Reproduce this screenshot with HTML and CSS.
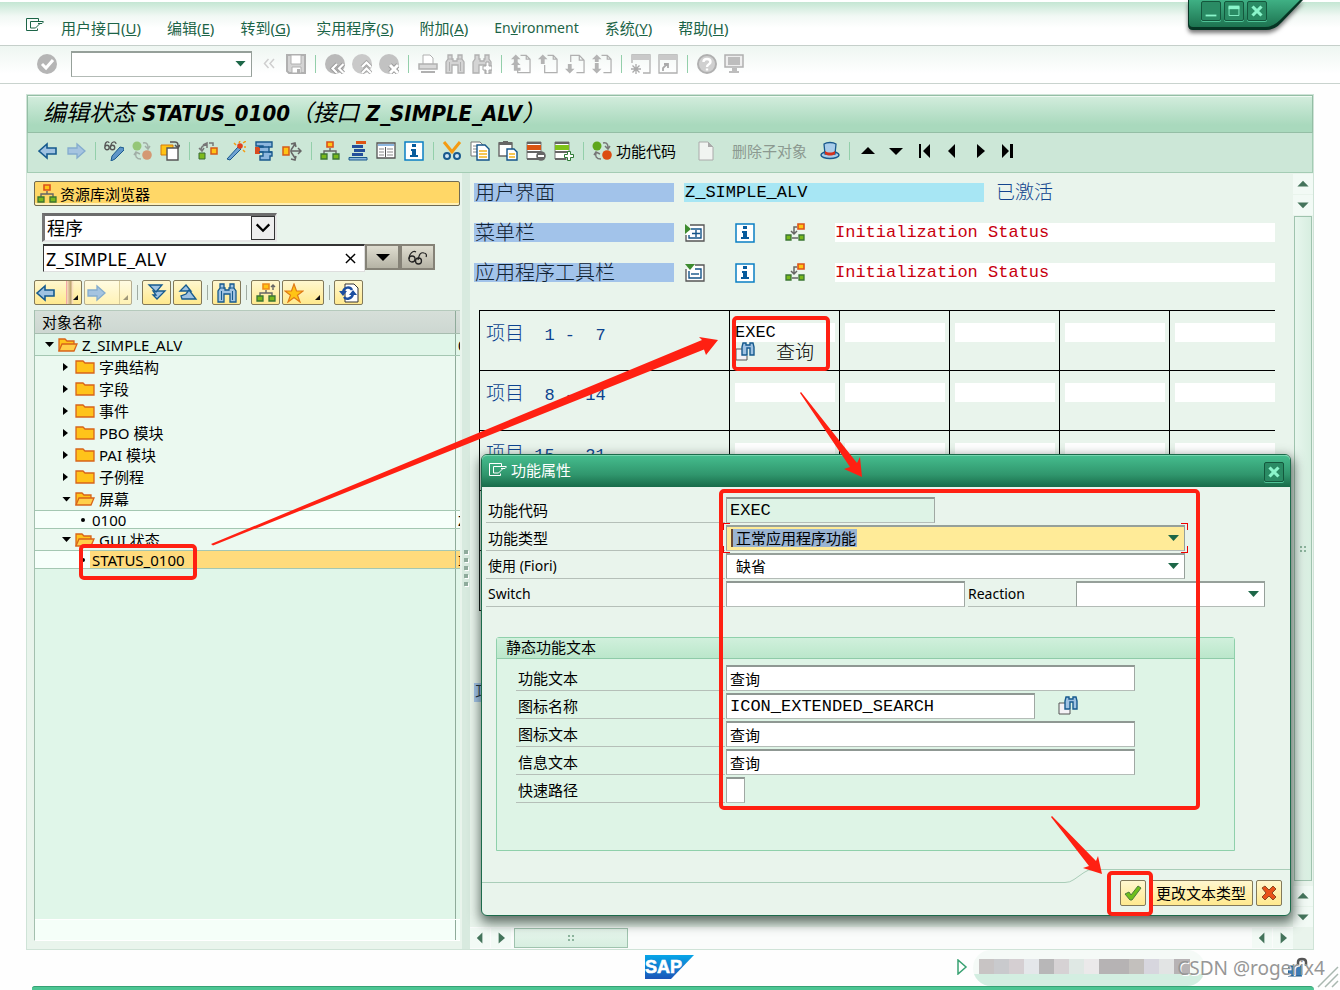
FILE: index.html
```html
<!DOCTYPE html>
<html lang="zh-CN">
<head>
<meta charset="utf-8">
<title>编辑状态 STATUS_0100</title>
<link rel="stylesheet" href="styles.css">
</head>
<body>
<svg class="defs" aria-hidden="true">
  <defs>
    <linearGradient id="winFill" x1="0" y1="0" x2="0" y2="1"><stop offset="0" stop-color="#3fb084"/><stop offset="1" stop-color="#1d7350"/></linearGradient>
    <linearGradient id="sapFill" x1="0" y1="0" x2="0" y2="1"><stop offset="0" stop-color="#07a6e8"/><stop offset="1" stop-color="#1b55b8"/></linearGradient>
  </defs>
  <symbol id="i-exit" viewBox="0 0 20 16"><path d="M13.500 4.500V1.500H1.500v12h11v-2M5.500 4.500h12.500c1 0 0 1-1 2l-4 0M5.500 4.500v6.500h5l2-2 2-2" fill="none" stroke="currentColor"/></symbol>
  <symbol id="i-ok" viewBox="0 0 20 20"><circle cx="10" cy="10" r="10" fill="#b5b5b5"/><path d="M5 10l4 4 7-8" fill="none" stroke="#fff" stroke-width="3"/></symbol>
  <symbol id="i-dbl" viewBox="0 0 20 20"><path d="M9.500 5l-4 4.500 4 4.500M15 5l-4 4.500 4 4.500" fill="none" stroke="#cfcfcf" stroke-width="1.500"/></symbol>
  <symbol id="i-save" viewBox="0 0 20 20"><path d="M1 1h18v18H3l-2-2z" fill="#d4d4d4" stroke="#b0b0b0" stroke-width="2"/><path d="M5 1h10v9H5zM6 13h9v6H6z" fill="#fff" stroke="#b0b0b0"/><path d="M11 15h3v4h-3z" fill="#b0b0b0"/></symbol>
  <symbol id="i-back" viewBox="0 0 20 20"><circle cx="10" cy="10" r="10" fill="#b9b9b9"/><path d="M12 10l-4.500 4.500L12 19M18.500 10L14 14.500l4.500 4.500" fill="none" stroke="#999" stroke-width="4"/><path d="M12 10l-4.500 4.500L12 19M18.500 10L14 14.500l4.500 4.500" fill="none" stroke="#fff" stroke-width="2.200"/></symbol>
  <symbol id="i-up" viewBox="0 0 20 20"><circle cx="10" cy="10" r="10" fill="#c9c9c9"/><path d="M10 13l4.500-4.500L19 13M10 19l4.500-4.500L19 19" fill="none" stroke="#a5a5a5" stroke-width="4"/><path d="M10 13l4.500-4.500L19 13M10 19l4.500-4.500L19 19" fill="none" stroke="#fff" stroke-width="2.200"/></symbol>
  <symbol id="i-cancel" viewBox="0 0 20 20"><circle cx="10" cy="10" r="10" fill="#c2c2c2"/><path d="M11 11l8 8M19 11l-8 8" stroke="#999" stroke-width="4.800"/><path d="M11 11l8 8M19 11l-8 8" stroke="#fff" stroke-width="3"/></symbol>
  <symbol id="i-print" viewBox="0 0 20 20"><path d="M5 10V1h7l3 3v6" fill="#fff" stroke="#b0b0b0"/><path d="M1 10h18v5H1z" fill="#d8d8d8" stroke="#b0b0b0" stroke-width="1.500"/><path d="M3 17h14v2H3z" fill="#b0b0b0"/></symbol>
  <symbol id="i-find" viewBox="0 0 20 20"><path d="M3 1h4v4h1v2h4V5h1V1h4v4l2 3v11h-6v-8H7v8H1V8l2-3z" fill="var(--ff,#d4d4d4)" stroke="var(--fs,#b0b0b0)" stroke-width="1.300"/><path d="M3 5h4M13 5h4M4.500 8v9M15.500 8v9" stroke="var(--fs,#b0b0b0)"/></symbol>
  <symbol id="i-findn" viewBox="0 0 20 20"><path d="M3 1h4v4h1v2h4V5h1V1h4v4l2 3v11h-6v-8H7v8H1V8l2-3z" fill="#d4d4d4" stroke="#b0b0b0" stroke-width="1.300"/><path d="M14 8h3v4h3v4h-3v4h-3v-4h-3v-4h3z" fill="#fff" stroke="#a5a5a5"/></symbol>
  <symbol id="i-pgf" viewBox="0 0 21 20"><path d="M10 1h6l4 4v14H7v-3M16 1v4h4" fill="none" stroke="#b0b0b0" stroke-width="1.300"/><path d="M5 0l5 5H7v3H3V5H0zM5 6l5 5H7v3h3v3H3v-6H0z" fill="#b4b4b4"/></symbol>
  <symbol id="i-pgu" viewBox="0 0 21 20"><path d="M10 1h6l4 4v14H7V11M16 1v4h4" fill="none" stroke="#b0b0b0" stroke-width="1.300"/><path d="M5 0l5 5H7v5H3V5H0z" fill="#b4b4b4"/></symbol>
  <symbol id="i-pgd" viewBox="0 0 21 20"><path d="M6 8V1h9l5 5v13h-8M15 1v5h5" fill="none" stroke="#b0b0b0" stroke-width="1.300"/><path d="M5 20l5-5H7v-5H3v5H0z" fill="#b4b4b4"/></symbol>
  <symbol id="i-pgl" viewBox="0 0 21 20"><path d="M10 1h6l4 4v14h-8M16 1v4h4" fill="none" stroke="#b0b0b0" stroke-width="1.300"/><path d="M5 0l5 5H7v3H3V5H0zM5 20l5-5H7V9H3v6H0z" fill="#b4b4b4"/></symbol>
  <symbol id="i-newwin" viewBox="0 0 20 20"><path d="M1 9V1h18v18h-7" fill="none" stroke="#b0b0b0" stroke-width="1.300"/><path d="M1 1h18v5H1z" fill="#c9c9c9"/><path d="M5 10v10M0 15h10M1.500 11.500l7 7M8.500 11.500l-7 7" stroke="#aaa" stroke-width="1.300"/></symbol>
  <symbol id="i-short" viewBox="0 0 20 20"><path d="M1 1h18v18H1z" fill="none" stroke="#b0b0b0" stroke-width="1.300"/><path d="M1 1h18v5H1z" fill="#c9c9c9"/><path d="M5 17v-3l4-4M6 10h4v4" fill="none" stroke="#aaa" stroke-width="1.800"/></symbol>
  <symbol id="i-help" viewBox="0 0 20 20"><circle cx="10" cy="10" r="9" fill="#d0d0d0" stroke="#b0b0b0" stroke-width="2"/><path d="M6.500 8c0-4 7-4 7 0 0 2.500-3.500 2-3.500 5M10 14.500v2" fill="none" stroke="#fff" stroke-width="2.400"/></symbol>
  <symbol id="i-mon" viewBox="0 0 20 20"><path d="M1 1h18v12H1z" fill="#eee" stroke="#b0b0b0" stroke-width="1.500"/><path d="M4 3h12v8H4zM8 14h5v3h2v2H5v-2h3z" fill="#bdbdbd"/></symbol>

  <symbol id="i-left" viewBox="0 0 20 20"><path d="M1 10l8-7v4h9v6H9v4z" fill="#9fc2e2" stroke="#165a8e" stroke-width="1.600"/></symbol>
  <symbol id="i-right" viewBox="0 0 20 20"><path d="M19 10l-8-7v4H2v6h9v4z" fill="#a5c4e0" stroke="#84acce" stroke-width="1.300"/></symbol>
  <symbol id="i-edit" viewBox="0 0 20 20"><path d="M1 5c0-5 4-5 4-3M7 5c0-5 5-5 5-2" fill="none" stroke="#555" stroke-width="1.200"/><circle cx="3" cy="6.500" r="2.200" fill="none" stroke="#555" stroke-width="1.400"/><circle cx="8.500" cy="6.500" r="2.200" fill="none" stroke="#555" stroke-width="1.400"/><path d="M8 15l8-9 4 1v2l-9 9-4 2z" fill="#5f96c8" stroke="#19598d"/></symbol>
  <symbol id="i-act" viewBox="0 0 20 20"><circle cx="5" cy="5" r="4.500" fill="#5fa71c"/><circle cx="15" cy="14" r="4.800" fill="#dc4c12"/><path d="M11 2c5-1 5 3 5 5M13 5l3 3 2-3M9 18c-5 0-6-3-5-6M2 14l2-3 4 2" fill="none" stroke="#777" stroke-width="1.500"/></symbol>
  <symbol id="i-other" viewBox="0 0 20 20"><path d="M1 4h12v10H1z" fill="#ffc414" stroke="#d77a0b"/><path d="M7 7h11v12H7z" fill="#fff" stroke="#555" stroke-width="1.400"/><path d="M10 1h5c3 0 3 2 3 5M15 4l3 3 2-3" fill="none" stroke="#555" stroke-width="1.500"/></symbol>
  <symbol id="i-where" viewBox="0 0 20 20"><path d="M1 12h6v6H1z" fill="#7dbb1d" stroke="#396b35"/><path d="M13 7h6v6h-6z" fill="#ffc414" stroke="#d55b18" stroke-width="1.500"/><path d="M3 9c0-5 4-5 6-5M5 4l4-2v5M15 5V2h-4M1 7l3 3 2-3" fill="none" stroke="#777" stroke-width="1.500"/></symbol>
  <symbol id="i-wand" viewBox="0 0 20 20"><path d="M1 18L12 6l3 2L4 19z" fill="#6fa3d3" stroke="#19598d"/><path d="M13 2l1-2M17 2l3-2M18 6h2M17 9l2 2M10 4L8 2" stroke="#f49b12" stroke-width="1.500"/><circle cx="14" cy="5" r="2.800" fill="#e1401d"/></symbol>
  <symbol id="i-clamp" viewBox="0 0 20 20"><path d="M2 1h16v5h-3v5h3v4h-2v4H6v-4h3v-4H5V6h4V5H2z" fill="#8db7df" stroke="#19598d" stroke-width="1.400"/><path d="M1 6h5v7H1z" fill="#d94b20"/><path d="M5 6h10M5 11h13" stroke="#19598d" stroke-width="1.400"/></symbol>
  <symbol id="i-move" viewBox="0 0 20 20"><path d="M1 6h6v8H1z" fill="#ffc414" stroke="#d55b18" stroke-width="1.500"/><path d="M8 10h11M16 7l3 3-3 3M9 9l4-6M9 3l4-1 1 4M9 11l4 6M9 18l4 1 1-4" fill="none" stroke="#666" stroke-width="1.500"/></symbol>
  <symbol id="i-tree" viewBox="0 0 20 20"><path d="M7 1h6v5H7z" fill="#ffc414" stroke="#dc5118" stroke-width="1.600"/><path d="M10 7v3M4 13v-3h12v3" fill="none" stroke="#666" stroke-width="1.400"/><path d="M1 13h6v5H1zM13 13h6v5h-6z" fill="#78b81b" stroke="#3b7533" stroke-width="1.300"/></symbol>
  <symbol id="i-parent" viewBox="0 0 20 20"><path d="M7 1h6v5H7z" fill="#ffc414" stroke="#ee8a18" stroke-width="1.600"/><path d="M10 7v3M4 13v-3h12v3M17 7V2M15 4l2-2 2 2" fill="none" stroke="#666" stroke-width="1.400"/><path d="M1 13h6v5H1zM13 13h6v5h-6z" fill="#78b81b" stroke="#3b7533" stroke-width="1.300"/></symbol>
  <symbol id="i-stack" viewBox="0 0 20 20"><path d="M8 0h10v3H8z" fill="#de5514"/><path d="M4 4h11v3H4zM6 8h11v3H6z" fill="#234f9a"/><path d="M4 12h11v3H4z" fill="#234f9a"/><path d="M1 16.500h18v2.500H1z" fill="#8db7df" stroke="#19598d"/></symbol>
  <symbol id="i-list" viewBox="0 0 20 20"><path d="M1 2h18v15H1z" fill="#fff" stroke="#555" stroke-width="1.300"/><path d="M2 3h16v2H2z" fill="#8db7df"/><path d="M3 8h5M3 11h5M3 14h5M11 8h6M11 11h6M11 14h6" stroke="#888" stroke-width="1.200"/><path d="M9.500 6v10" stroke="#555"/></symbol>
  <symbol id="i-info" viewBox="0 0 20 20"><path d="M1 1h18v18H1z" fill="#fff" stroke="#0a7fc4" stroke-width="1.500"/><path d="M8 3h4v3H8zM7 8h5v6h2v2H6v-2h2v-4H7z" fill="#075b9c"/></symbol>
  <symbol id="i-cut" viewBox="0 0 20 20"><path d="M2 1l9 11M18 1L9 12" stroke="#f49b12" stroke-width="3"/><circle cx="5" cy="15" r="3" fill="#cfe5f5" stroke="#19598d" stroke-width="2"/><circle cx="15" cy="15" r="3" fill="#cfe5f5" stroke="#19598d" stroke-width="2"/></symbol>
  <symbol id="i-copy" viewBox="0 0 20 20"><path d="M1 1h9l3 3v11H1z" fill="#fff" stroke="#777"/><path d="M3 5h5M3 8h4M3 11h4" stroke="#888"/><path d="M7 4h8l4 4v11H7z" fill="#fff" stroke="#145489" stroke-width="1.400"/><path d="M9 10h8M9 13h8M9 16h8" stroke="#f3b41b" stroke-width="1.500"/></symbol>
  <symbol id="i-paste" viewBox="0 0 20 20"><path d="M1 2h13v13H1z" fill="#fff" stroke="#666" stroke-width="1.400"/><path d="M1 1h13v3H1zM5 0h5v3H5z" fill="#666"/><path d="M9 8h7l3 3v8H9z" fill="#fff" stroke="#145489" stroke-width="1.400"/><path d="M11 13h6M11 16h6" stroke="#f3b41b" stroke-width="1.500"/></symbol>
  <symbol id="i-delrow" viewBox="0 0 20 20"><path d="M1 1h14v17H1z" fill="#fff" stroke="#777"/><path d="M1 4h14v5H1z" fill="#d95412"/><path d="M1 1h14v2H1zM1 10h14v2H1zM1 17h11v2H1z" fill="#666"/><circle cx="15" cy="15" r="4.800" fill="#666"/><path d="M12 15h6" stroke="#fff" stroke-width="2"/></symbol>
  <symbol id="i-addrow" viewBox="0 0 20 20"><path d="M1 1h14v17H1z" fill="#fff" stroke="#777"/><path d="M1 4h14v5H1z" fill="#7fc21a"/><path d="M1 1h14v2H1zM1 10h14v2H1zM1 17h11v2H1z" fill="#666"/><path d="M13.500 10.500h3v3h3v3h-3v3h-3v-3h-3v-3h3z" fill="#fff" stroke="#2d7a35"/></symbol>
  <symbol id="i-page" viewBox="0 0 20 20"><path d="M3 1h9l5 5v13H3z" fill="#f1f4f1" stroke="#aaa"/><path d="M12 1v5h5z" fill="#aaa"/></symbol>
  <symbol id="i-hat" viewBox="0 0 20 20"><ellipse cx="10" cy="14" rx="9" ry="3.500" fill="#a9cdea" stroke="#19598d" stroke-width="1.500"/><path d="M5 13L4 3c3-2 9-2 12 0l-1 10z" fill="#a9cdea" stroke="#19598d" stroke-width="1.300"/><path d="M5 10c3 2 7 2 10 0v3c-3 2-7 2-10 0z" fill="#d4321c"/></symbol>
  <symbol id="i-tup" viewBox="0 0 20 20"><path d="M3 13l7-7 7 7z"/></symbol>
  <symbol id="i-tdn" viewBox="0 0 20 20"><path d="M3 7l7 7 7-7z"/></symbol>
  <symbol id="i-first" viewBox="0 0 20 20"><path d="M5 3h2v14H5zM16 3v14l-7-7z"/></symbol>
  <symbol id="i-prev" viewBox="0 0 20 20"><path d="M13 3v14l-7-7z"/></symbol>
  <symbol id="i-next" viewBox="0 0 20 20"><path d="M7 3v14l8-7z"/></symbol>
  <symbol id="i-last" viewBox="0 0 20 20"><path d="M4 3v14l7-7zM12 3h3v14h-3z"/></symbol>

  <symbol id="i-glass" viewBox="0 0 20 20"><path d="M1 12c0-5 4-9 7-7M10 13c1-6 3-8 6-7 2 0 3 2 2 4" fill="none" stroke="#222" stroke-width="1.200"/><circle cx="4" cy="12" r="3" fill="none" stroke="#222" stroke-width="1.300"/><circle cx="10.500" cy="14" r="3" fill="none" stroke="#222" stroke-width="1.300"/></symbol>
  <symbol id="i-expand" viewBox="0 0 20 20"><path d="M6 8h12l-8 8-4-4h3z" fill="#9fc2e2" stroke="#165a8e" stroke-width="1.300"/><path d="M2 2h13l-6 7z" fill="#9fc2e2" stroke="#165a8e" stroke-width="1.300"/></symbol>
  <symbol id="i-collapse" viewBox="0 0 20 20"><path d="M8 2l5 6H2z" fill="#9fc2e2" stroke="#165a8e" stroke-width="1.300"/><path d="M11 7l7 9H4l-1-3 5-2z" fill="#9fc2e2" stroke="#165a8e" stroke-width="1.300"/></symbol>
  <symbol id="i-star" viewBox="0 0 20 20"><path d="M10 1l2.500 7H19l-5.500 4.200L16 19l-6-4.500L4 19l2.500-6.800L1 8h6.500z" fill="#ffc414" stroke="#e07a16" stroke-width="1.200"/></symbol>
  <symbol id="i-refresh" viewBox="0 0 20 20"><path d="M6 1h9l4 4v14H6z" fill="#fff" stroke="#333"/><path d="M4 9c1-5 7-6 9-2M14 11c-1 5-7 6-9 3" fill="none" stroke="#1d4fa0" stroke-width="2.400"/><path d="M0 8h8l-4 5zM10 12h8l-4-5z" fill="#1d4fa0"/></symbol>
  <symbol id="i-folder" viewBox="0 0 20 14"><path d="M1 13V1h7l2 2h9v10z" fill="#ffc31a" stroke="#d8641a" stroke-width="1.300"/></symbol>
  <symbol id="i-fopen" viewBox="0 0 20 14"><path d="M1 13V1h6l2 2h7v3" fill="#ffc31a" stroke="#d8641a" stroke-width="1.300"/><path d="M1 13l3-7h15l-3 7z" fill="#ffcf4a" stroke="#d8641a" stroke-width="1.300"/></symbol>
  <symbol id="i-plus" viewBox="0 0 20 20"><path d="M5 2h14v16H1v-6" fill="#fff" stroke="#555" stroke-width="1.300"/><path d="M6 6h10v9H4v-3" fill="none" stroke="#145489" stroke-width="1.400"/><path d="M7 10.500h8M11 7v7" stroke="#145489" stroke-width="1.400"/><path d="M0 1l6 5-6 5z" fill="#3d8b2f"/></symbol>
  <symbol id="i-minus" viewBox="0 0 20 20"><path d="M10 2h9v16H1V6" fill="#fff" stroke="#555" stroke-width="1.300"/><path d="M10 6h6v9H4V8" fill="none" stroke="#145489" stroke-width="1.400"/><path d="M6 11h8" stroke="#145489" stroke-width="1.400"/><path d="M0 1h10L5 7z" fill="#3d8b2f"/></symbol>
  <symbol id="i-hier" viewBox="0 0 20 20"><path d="M13 1h6v5h-6z" fill="#ffc414" stroke="#dc5118" stroke-width="1.600"/><path d="M12 4H9v6M6 8l3 3 3-3M7 15h6" fill="none" stroke="#666" stroke-width="1.500"/><path d="M1 12h5v5H1zM14 12h5v5h-5z" fill="#78b81b" stroke="#3b7533" stroke-width="1.300"/></symbol>
  <symbol id="i-ext" viewBox="0 0 20 20"><path d="M7 7H1v11h11v-4" fill="#f4f2f6" stroke="#555"/><path d="M8 1h3v2h4V1h3l1 4v8h-4V6h-3v7H7V5z" fill="#9fc2e2" stroke="#165a8e" stroke-width="1.400"/></symbol>
  <symbol id="i-check" viewBox="0 0 20 20"><path d="M2 11l4-2 2 3 7-9 3 2-9 12H7z" fill="#6fbf1c" stroke="#4b7c3c"/></symbol>
  <symbol id="i-x" viewBox="0 0 20 20"><path d="M3 5l3-2 4 4 4-4 3 3-4 4 4 4-3 3-4-4-4 4-3-3 4-4z" fill="#e8531a" stroke="#8a4a25"/></symbol>
  <symbol id="i-wx" viewBox="0 0 20 20"><path d="M5 5l10 10M15 5L5 15" stroke="#8bf5cb" stroke-width="3.500"/></symbol>
</svg>

<header class="menubar">
  <svg class="exit"><use href="#i-exit"/></svg>
  <nav class="menus">
    <button>用户接口(<u>U</u>)</button><button>编辑(<u>E</u>)</button><button>转到(<u>G</u>)</button><button>实用程序(<u>S</u>)</button><button>附加(<u>A</u>)</button><button class="latin">En<u>v</u>ironment</button><button>系统(<u>Y</u>)</button><button>帮助(<u>H</u>)</button>
  </nav>
</header>
<div class="wincontrols">
  <svg class="winshape" viewBox="0 0 115 36"><path d="M0 0h115L94 22q-7 8-16 8H5q-5 0-5-5z" fill="#063524"/><path d="M1 0h111L92 20q-7 7-15 7H5q-4 0-4-4z" fill="url(#winFill)"/></svg>
  <button aria-label="最小化"><svg viewBox="0 0 20 20"><path d="M4 14h12v2H4z" fill="#8bf5cb"/></svg></button>
  <button aria-label="最大化"><svg viewBox="0 0 20 20"><path d="M4.500 5h11v10h-11z" fill="none" stroke="#8bf5cb"/><path d="M4 4h12v4H4z" fill="#8bf5cb"/></svg></button>
  <button aria-label="关闭"><svg><use href="#i-wx"/></svg></button>
</div>

<div class="stdbar">
  <button class="t" aria-label="确认"><svg><use href="#i-ok"/></svg></button>
  <span class="dd cmd"><select aria-label="命令"><option></option></select></span>
  <button class="t" aria-label="收起"><svg><use href="#i-dbl"/></svg></button>
  <button class="t" aria-label="保存"><svg><use href="#i-save"/></svg></button><i class="sep"></i>
  <button class="t" aria-label="返回"><svg><use href="#i-back"/></svg></button>
  <button class="t" aria-label="退出"><svg><use href="#i-up"/></svg></button>
  <button class="t" aria-label="取消"><svg><use href="#i-cancel"/></svg></button><i class="sep"></i>
  <button class="t" aria-label="打印"><svg><use href="#i-print"/></svg></button>
  <button class="t" aria-label="查找"><svg><use href="#i-find"/></svg></button>
  <button class="t" aria-label="查找下一个"><svg><use href="#i-findn"/></svg></button><i class="sep"></i>
  <button class="t" aria-label="第一页"><svg><use href="#i-pgf"/></svg></button>
  <button class="t" aria-label="上一页"><svg><use href="#i-pgu"/></svg></button>
  <button class="t" aria-label="下一页"><svg><use href="#i-pgd"/></svg></button>
  <button class="t" aria-label="最后一页"><svg><use href="#i-pgl"/></svg></button><i class="sep"></i>
  <button class="t" aria-label="新会话"><svg><use href="#i-newwin"/></svg></button>
  <button class="t" aria-label="快捷方式"><svg><use href="#i-short"/></svg></button><i class="sep"></i>
  <button class="t" aria-label="帮助"><svg><use href="#i-help"/></svg></button>
  <button class="t" aria-label="布局"><svg><use href="#i-mon"/></svg></button>
</div>

<main class="work">
  <h1 class="title"><span>编辑状态</span> STATUS_0100<span>（接口</span> Z_SIMPLE_ALV<span>）</span></h1>
  <div class="appbar">
    <button class="t" aria-label="后退"><svg><use href="#i-left"/></svg></button>
    <button class="t" aria-label="前进"><svg><use href="#i-right"/></svg></button><i class="sep"></i>
    <button class="t" aria-label="显示/更改"><svg><use href="#i-edit"/></svg></button>
    <button class="t dim" aria-label="激活/未激活"><svg><use href="#i-act"/></svg></button>
    <button class="t" aria-label="其他对象"><svg><use href="#i-other"/></svg></button><i class="sep"></i>
    <button class="t" aria-label="检查"><svg><use href="#i-where"/></svg></button>
    <button class="t" aria-label="激活"><svg><use href="#i-wand"/></svg></button>
    <button class="t" aria-label="测试"><svg><use href="#i-clamp"/></svg></button>
    <button class="t" aria-label="使用位置"><svg><use href="#i-move"/></svg></button><i class="sep"></i>
    <button class="t" aria-label="对象列表"><svg><use href="#i-tree"/></svg></button>
    <button class="t" aria-label="导航"><svg><use href="#i-stack"/></svg></button>
    <button class="t" aria-label="列表"><svg><use href="#i-list"/></svg></button>
    <button class="t" aria-label="信息"><svg><use href="#i-info"/></svg></button><i class="sep"></i>
    <button class="t" aria-label="剪切"><svg><use href="#i-cut"/></svg></button>
    <button class="t" aria-label="复制"><svg><use href="#i-copy"/></svg></button>
    <button class="t" aria-label="粘贴"><svg><use href="#i-paste"/></svg></button>
    <button class="t" aria-label="删除行"><svg><use href="#i-delrow"/></svg></button>
    <button class="t" aria-label="插入行"><svg><use href="#i-addrow"/></svg></button><i class="sep"></i>
    <button class="wt"><svg><use href="#i-act"/></svg>功能代码</button>
    <button class="wt off" disabled><svg><use href="#i-page"/></svg><span>删除子对象</span></button>
    <button class="t" aria-label="帽子"><svg><use href="#i-hat"/></svg></button><i class="sep"></i>
    <button class="t" aria-label="上"><svg><use href="#i-tup"/></svg></button>
    <button class="t" aria-label="下"><svg><use href="#i-tdn"/></svg></button>
    <button class="t" aria-label="首"><svg><use href="#i-first"/></svg></button>
    <button class="t" aria-label="前"><svg><use href="#i-prev"/></svg></button>
    <button class="t" aria-label="后"><svg><use href="#i-next"/></svg></button>
    <button class="t" aria-label="末"><svg><use href="#i-last"/></svg></button>
  </div>

  <div class="content">
    <aside class="nav">
      <button class="repo"><svg><use href="#i-tree"/></svg>资源库浏览器</button>
      <div class="pick"><select aria-label="对象类型"><option>程序</option></select><span class="chev"><svg viewBox="0 0 20 20"><path d="M3 6l7 7 7-7" fill="none" stroke="#000" stroke-width="2.500"/></svg></span></div>
      <div class="name">
        <div class="namebox"><input aria-label="对象名称" value="Z_SIMPLE_ALV"><button aria-label="清除"><svg viewBox="0 0 12 12"><path d="M1 1l10 10M11 1L1 11" stroke="#000" stroke-width="1.500"/></svg></button></div>
        <button class="gray" aria-label="历史"><svg><use href="#i-tdn"/></svg></button>
        <button class="gray" aria-label="显示"><svg><use href="#i-glass"/></svg></button>
      </div>
      <div class="navbar">
        <button class="y split pink" aria-label="后退"><svg><use href="#i-left"/></svg><b></b></button>
        <button class="y split pale" aria-label="前进"><svg><use href="#i-right"/></svg><b></b></button><i class="vs"></i>
        <button class="y" aria-label="展开"><svg><use href="#i-expand"/></svg></button>
        <button class="y" aria-label="折叠"><svg><use href="#i-collapse"/></svg></button><i class="vs"></i>
        <button class="y blue" aria-label="查找"><svg><use href="#i-find"/></svg></button><i class="vs"></i>
        <button class="y" aria-label="上级"><svg><use href="#i-parent"/></svg></button>
        <button class="y star" aria-label="收藏"><svg><use href="#i-star"/></svg><b></b></button><i class="vs"></i>
        <button class="y" aria-label="刷新"><svg><use href="#i-refresh"/></svg></button>
      </div>
      <div class="tree">
        <div class="thead"><span>对象名称</span><i></i></div>
        <ul>
          <li class="root open"><div><svg><use href="#i-fopen"/></svg>Z_SIMPLE_ALV</div><i>0</i></li>
          <li class="sub"><div><svg><use href="#i-folder"/></svg>字典结构</div><i></i></li>
          <li class="sub"><div><svg><use href="#i-folder"/></svg>字段</div><i></i></li>
          <li class="sub"><div><svg><use href="#i-folder"/></svg>事件</div><i></i></li>
          <li class="sub"><div><svg><use href="#i-folder"/></svg>PBO 模块</div><i></i></li>
          <li class="sub"><div><svg><use href="#i-folder"/></svg>PAI 模块</div><i></i></li>
          <li class="sub"><div><svg><use href="#i-folder"/></svg>子例程</div><i></i></li>
          <li class="sub open"><div><svg><use href="#i-fopen"/></svg>屏幕</div><i></i></li>
          <li class="leaf"><div><span>0100</span></div><i>Z</i></li>
          <li class="sub open gui"><div><svg><use href="#i-fopen"/></svg>GUI 状态</div><i></i></li>
          <li class="leaf sel"><div><span>STATUS_0100</span></div><i>I</i></li>
        </ul>
        <div class="rest"><i></i></div>
        <div class="tfoot"><i></i></div>
      </div>
    </aside>
    <div class="splitter"><i></i><i></i><i></i><i></i><i></i></div>
    <section class="editor">
      <div class="canvas">
        <div class="info"><span class="lab">用户界面</span><span class="cyan mono">Z_SIMPLE_ALV</span><span class="active">已激活</span></div>
        <div class="info"><span class="lab">菜单栏</span><button aria-label="展开"><svg><use href="#i-plus"/></svg></button><button aria-label="信息"><svg><use href="#i-info"/></svg></button><button aria-label="层次"><svg><use href="#i-hier"/></svg></button><input class="mono red" aria-label="菜单栏" value="Initialization Status"></div>
        <div class="info"><span class="lab">应用程序工具栏</span><button aria-label="折叠"><svg><use href="#i-minus"/></svg></button><button aria-label="信息"><svg><use href="#i-info"/></svg></button><button aria-label="层次"><svg><use href="#i-hier"/></svg></button><input class="mono red" aria-label="应用程序工具栏" value="Initialization Status"></div>
        <table class="items">
          <tr><th><span>项目</span><pre>  1 -  7</pre></th><td><input class="mono" aria-label="1" value="EXEC"><div class="fn"><svg><use href="#i-ext"/></svg>查询</div></td><td><input aria-label="2"></td><td><input aria-label="3"></td><td><input aria-label="4"></td><td><input aria-label="5"></td></tr>
          <tr><th><span>项目</span><pre>  8 - 14</pre></th><td><input aria-label="8"></td><td><input aria-label="9"></td><td><input aria-label="10"></td><td><input aria-label="11"></td><td><input aria-label="12"></td></tr>
          <tr><th><span>项目</span><pre> 15 - 21</pre></th><td><input aria-label="15"></td><td><input aria-label="16"></td><td><input aria-label="17"></td><td><input aria-label="18"></td><td><input aria-label="19"></td></tr>
          <tr><th></th><td></td><td></td><td></td><td></td><td></td></tr>
          <tr><th></th><td></td><td></td><td></td><td></td><td></td></tr>
        </table>
        <div class="info keys"><span class="lab">项</span></div>
      </div>
      <div class="vscroll"><svg><use href="#i-tup"/></svg><svg><use href="#i-tdn"/></svg><div class="thumb"><i class="grip"></i></div><svg><use href="#i-tup"/></svg><svg><use href="#i-tdn"/></svg></div>
      <div class="hscroll"><svg><use href="#i-prev"/></svg><svg><use href="#i-next"/></svg><div class="thumb"><i class="grip"></i></div><span></span><svg><use href="#i-prev"/></svg><svg><use href="#i-next"/></svg></div>
    </section>
  </div>
</main>

<footer class="status">
  <svg class="sap" viewBox="0 0 49 24"><path d="M0 0h49L26 24H0z" fill="url(#sapFill)"/><text x="0" y="18" font-size="18">SAP</text></svg>
  <svg class="play" viewBox="0 0 12 16"><path d="M2 1v14l8-7z" fill="#fff" stroke="#39a273" stroke-width="1.500"/></svg>
  <div class="pill"><i></i></div>
  <svg class="lock" viewBox="0 0 20 20"><path d="M0 9h14v10H0z" fill="#3d7cb5" stroke="#17507f"/><path d="M10 9V5c0-4 8-4 8 0v4" fill="none" stroke="#555" stroke-width="2.500"/></svg>
  <span class="mark">CSDN @rogerix4</span>
  <svg class="resize" viewBox="0 0 22 22"><path d="M1 21L21 1M8 21L21 8M15 21l6-6" stroke="#a9b8b0" stroke-width="1.500"/></svg>
</footer>
<div class="bottomline"></div>

<section class="dialog" role="dialog" aria-labelledby="dt">
  <header><svg class="exit"><use href="#i-exit"/></svg><h2 id="dt">功能属性</h2><button aria-label="关闭"><svg><use href="#i-wx"/></svg></button></header>
  <div class="form">
    <div class="row"><label for="fc">功能代码</label><input id="fc" class="mono ro w208" value="EXEC" readonly></div>
    <div class="row"><label for="ft">功能类型</label><span class="dd focus w458"><select id="ft"><option>正常应用程序功能</option></select></span></div>
    <div class="row"><label for="fu">使用 (Fiori)</label><span class="dd w458"><select id="fu"><option>缺省</option></select></span></div>
    <div class="row"><label for="sw">Switch</label><input id="sw" class="w238"><label class="mid" for="re">Reaction</label><span class="dd w188"><select id="re"><option></option></select></span></div>
  </div>
  <fieldset class="group">
    <h3>静态功能文本</h3>
    <div class="row"><label for="g1">功能文本</label><input id="g1" class="w408" value="查询"></div>
    <div class="row"><label for="g2">图标名称</label><input id="g2" class="mono w308" value="ICON_EXTENDED_SEARCH"><button class="pickicon" aria-label="选择图标"><svg><use href="#i-ext"/></svg></button></div>
    <div class="row"><label for="g3">图标文本</label><input id="g3" class="w408" value="查询"></div>
    <div class="row"><label for="g4">信息文本</label><input id="g4" class="w408" value="查询"></div>
    <div class="row"><label for="g5">快速路径</label><input id="g5" class="w18"></div>
  </fieldset>
  <div class="dfoot">
    <span class="ln"></span><svg viewBox="0 0 28 14"><path d="M0 13.500q5 0 9-3l10-7q4-3 9-3" fill="none" stroke="#a9cdb8"/></svg>
    <div class="acts"><button class="y" aria-label="继续"><svg><use href="#i-check"/></svg></button><button class="y">更改文本类型</button><button class="y" aria-label="取消"><svg><use href="#i-x"/></svg></button></div>
  </div>
</section>

<svg class="notes" viewBox="0 0 1340 990" aria-hidden="true">
  <g fill="none" stroke="#ff2012" stroke-width="4"><rect x="81" y="546" width="114" height="32" rx="3"/><rect x="734" y="318" width="94" height="51" rx="3"/><rect x="721" y="491" width="477" height="317" rx="3"/><rect x="1109" y="873" width="42" height="41" rx="3"/></g>
  <g fill="#ff2012"><path d="M211 544L702 340 699 337 718 340 706 355 704 349.500 213 545.500z"/><path d="M801 392L857 463 860 457 862 477 844 469 850 467 800 393z"/><path d="M1052 816L1096 861 1098 856 1102 874 1083 868 1089 866 1051 817z"/></g>
</svg>
</body>
</html>
```
FILE: styles.css
```css
* { box-sizing: border-box; }
body { margin: 0; height: 100vh; min-height: 990px; display: flex; flex-direction: column; background: #fefefe; color: #000; font: 15px/20px "Noto Sans", "Noto Sans CJK SC", sans-serif; overflow: hidden; position: relative; }
button, input, select { font: inherit; color: inherit; margin: 0; padding: 0; border: 0; background: none; border-radius: 0; min-width: 0; }
button svg { width: 20px; height: 20px; display: block; flex: none; }
.defs { position: absolute; width: 0; height: 0; }
.mono, pre { font-family: "Liberation Mono", "Noto Sans CJK SC", monospace; font-size: 17px; }

.menubar { height: 46px; flex: none; display: flex; align-items: center; padding: 8px 0 0 25px; border-top: 2px solid #fff; border-bottom: 1px solid #c5cfca; background: linear-gradient(#c4e6d3, #f1f8f4 14px, #fff 26px); color: #1c6447; }
.exit { width: 20px; height: 16px; margin: 0 16px 6px 0; flex: none; }
.menus { display: flex; gap: 26px; }
.menus button { white-space: nowrap; }
.latin { font-size: 14px; }
.wincontrols { position: absolute; right: 36px; top: 0; width: 116px; height: 36px; padding: 1px 0 0 13px; display: flex; gap: 3px; }
.winshape { position: absolute; left: 0; top: 0; width: 115px; height: 36px; filter: drop-shadow(0 3px 2px #777); }
.wincontrols button, .dialog header button { position: relative; width: 20px; height: 20px; border: 1px solid #14583d; border-radius: 2px; background: #2a8b64; box-shadow: 0 1px 0 #4ec296; }
.wincontrols button svg, .dialog header button svg { width: 18px; height: 18px; }

.stdbar { height: 38px; flex: none; display: flex; align-items: center; padding: 0 0 2px 33px; border-bottom: 1px solid #c9d3ce; background: linear-gradient(#eef6f1, #fff 28px); }
.t { height: 28px; display: flex; align-items: center; justify-content: center; flex: none; }
.stdbar .t { width: 27px; }
.appbar .t { width: 28px; }
.sep { width: 12px; height: 18px; flex: none; background: linear-gradient(#93cfaa, #93cfaa) center / 1px 100% no-repeat; }
.dd { position: relative; display: block; flex: none; }
.dd select { appearance: none; display: block; width: 100%; height: 26px; border: 1px solid #96a09a; border-bottom-color: #b3bbb6; border-top-width: 2px; background: #fff; padding: 0 0 2px 9px; }
.dd::after { content: ""; position: absolute; right: 6px; top: 10px; width: 11px; height: 6px; background: #1d6748; clip-path: polygon(0 0, 100% 0, 50% 100%); pointer-events: none; }
.cmd { width: 181px; margin: 0 3px 0 11px; }

.work { flex: 1; min-height: 0; margin: 10px 26px 0; display: flex; flex-direction: column; border: 1px solid #cfe3d7; background: #e9f4ec; }
.title { margin: 0; height: 38px; flex: none; padding-left: 15px; font: italic bold 22px/34px "DejaVu Sans Condensed", "Noto Sans", "Noto Sans CJK SC", sans-serif; white-space: nowrap; border: 1px solid #94bea5; background: linear-gradient(#d3eddd, #a9d9bd 80%); box-shadow: inset 0 1px #eefaf2; }
.title span { font-family: "Noto Sans CJK SC", sans-serif; font-weight: 400; font-size: 23px; line-height: 30px; }
.appbar { height: 40px; flex: none; display: flex; align-items: center; padding: 0 0 3px 6px; border: 1px solid #a4ccb4; border-top: 0; background: #cce7d7; }
.appbar .sep { width: 10px; }
.dim svg { opacity: .5; }
.wt { display: flex; align-items: center; gap: 4px; padding-left: 4px; white-space: nowrap; }
.wt.off { color: #8b9990; padding-left: 20px; gap: 16px; margin-right: 9px; }

.content { flex: 1; min-height: 0; display: flex; }
.nav { width: 435px; flex: none; padding: 8px 2px 8px 7px; display: flex; flex-direction: column; }
.repo { height: 25px; flex: none; display: flex; align-items: center; gap: 3px; padding-left: 2px; border: 1px solid #6f6a53; border-radius: 2px; background: #ffd767; box-shadow: inset 0 -2px #fff0b6; }
.pick { width: 235px; height: 30px; margin: 7px 0 0 8px; position: relative; flex: none; }
.pick select { appearance: none; width: 100%; height: 29px; padding-left: 2px; font-size: 18px; background: #fff; border: 2px solid #e6e6e6; border-top: 3px solid #6c6c6c; border-left: 3px solid #757575; }
.chev { position: absolute; right: 2px; top: 3px; width: 24px; height: 24px; border: 1px solid #333; background: #eee; pointer-events: none; padding: 2px; }
.chev svg { width: 18px; height: 18px; display: block; }
.name { height: 28px; margin: 1px 0 8px 9px; display: flex; flex: none; }
.namebox { width: 322px; display: flex; align-items: center; background: #fff; border: 1px solid #dedede; border-top: 2px solid #333; border-left: 1px solid #333; }
.namebox input { flex: 1; padding-left: 2px; font-size: 18px; outline: 0; }
.namebox button { width: 27px; }
.namebox button svg { width: 11px; height: 11px; margin: auto; }
.gray { width: 35px; border: 2px solid #858277; background: linear-gradient(#dfddd0, #b5b3a5); padding-left: 6px; height: 26px; }
.navbar { height: 25px; display: flex; align-items: center; flex: none; gap: 2px; margin-bottom: 5px; }
.y { height: 25px; min-width: 29px; flex: none; display: flex; align-items: center; justify-content: center; border: 1px solid #82795a; border-radius: 2px; background: linear-gradient(#fff7cf, #ffe98e); white-space: nowrap; }
.y.split, .y.star { width: 48px; padding-left: 1px; justify-content: flex-start; position: relative; }
.y.star { width: 42px; }
.y b { position: absolute; right: 3px; bottom: 4px; width: 5px; height: 5px; background: #111; clip-path: polygon(100% 0, 100% 100%, 0 100%); }
.y.pink { background: linear-gradient(90deg, transparent 31px, #f3a7a7 31px, #f3a7a7 32px, #f9dbc0 32px, #b9a36b 36px, #f9dbc0 37px, transparent 39px), linear-gradient(#fff7cf, #ffe98e); }
.y.pale { border-color: #b4ad91; background: linear-gradient(90deg, transparent 34px, #d9cd9a 34px, #d9cd9a 35px, transparent 35px), linear-gradient(#fffbe2, #fff2b5); }
.y.pale b { opacity: .4; }
.vs { width: 1px; height: 15px; background: #a0aca3; margin: 0 2px 0 3px; }
.blue { --ff: #9fc2e2; --fs: #165a8e; }
.tree { flex: 1; display: flex; flex-direction: column; border-left: 1px solid #a3bfae; min-height: 0; border-bottom: 1px solid #fff; }
.thead { height: 24px; display: flex; border-top: 1px solid #b5cabc; border-bottom: 1px solid #a7bdaf; background: linear-gradient(#d6dfd9, #cdd7d1); line-height: 22px; }
.thead span { flex: 1; padding-left: 7px; }
.tree i { width: 5px; border-left: 1px solid #8fab9a; flex: none; overflow: hidden; font-style: normal; padding-left: 2px; }
.tree ul { list-style: none; margin: 0; padding: 0; }
.tree li { height: 22px; display: flex; background: #ebf9f0; line-height: 22px; white-space: nowrap; overflow: hidden; }
.tree li div { flex: 1; display: flex; align-items: center; gap: 4px; }
.tree li svg { width: 20px; height: 14px; flex: none; }
.tree li div::before { content: ""; width: 5px; height: 8px; background: #000; clip-path: polygon(0 0, 100% 50%, 0 100%); margin-left: 28px; margin-right: 3px; flex: none; }
.tree li.open div::before { width: 9px; height: 5px; clip-path: polygon(0 0, 100% 0, 50% 100%); margin-right: 0; margin-left: 27px; }
.tree li.root div::before { margin-left: 10px; }
.tree li.root { background: #e0f6e9; border-bottom: 1px solid #a4c7b2; }
.tree li.gui { height: 21px; }
.tree li.leaf { height: 19px; line-height: 18px; background: #f6fffa; border: solid #a4c7b2; border-width: 1px 0; }
.tree li.leaf div { gap: 0; }
.tree li.leaf div::before { width: 4px; height: 4px; border-radius: 2px; clip-path: none; margin-left: 46px; margin-right: 5px; }
.tree li.leaf span { flex: 1; padding-left: 2px; }
.tree li.sel span, .tree li.sel i { background: #ffdb7c; }
.rest { flex: 1; background: #e0f6e9; display: flex; justify-content: flex-end; }
.tfoot { height: 21px; background: #f5fff9; display: flex; justify-content: flex-end; border-top: 1px solid #fff; }
.splitter { width: 8px; flex: none; background: #d8eadf; display: flex; flex-direction: column; justify-content: center; align-items: center; gap: 4px; padding-top: 14px; }
.splitter i { width: 4px; height: 4px; background: #8fab9c; box-shadow: 1px 1px #fff; }

.editor { flex: 1; min-width: 0; display: grid; grid-template: minmax(0, 1fr) 22px / minmax(0, 1fr) 20px; }
.canvas { padding: 10px 18px 0 4px; overflow: hidden; font-size: 19px; }
.info { height: 19px; margin-bottom: 21px; display: flex; line-height: 19px; white-space: nowrap; align-items: center; }
.lab { width: 200px; background: #a2c3ea; color: #123; flex: none; height: 19px; padding-left: 1px; font-size: 20px; font-weight: 300; margin-right: 10px; }
.cyan { width: 300px; background: #a7e6f4; height: 19px; padding-left: 1px; }
.active { color: #12458e; margin-left: 12px; font-weight: 300; }
.info button { width: 50px; padding-left: 1px; flex: none; }
.info input { flex: 1; height: 19px; background: #fff; margin-left: 1px; }
.red { color: #c8000e; }
.items { border-collapse: collapse; table-layout: fixed; width: calc(100% - 5px); margin: 28px 0 0 5px; border-top: 1px solid #000; border-left: 1px solid #000; }
.items tr { height: 60px; border-bottom: 1px solid #000; }
.items th { width: 250px; text-align: left; vertical-align: top; color: #0d438f; font-weight: 300; padding: 12px 0 0 6px; line-height: 20px; }
.items th pre { display: inline; margin: 0; }
.items td { width: 110px; border-left: 1px solid #000; vertical-align: top; padding: 12px 4px 0 5px; }
.items td:last-child { width: auto; padding-right: 0; }
.items input { display: block; width: 100%; height: 19px; background: #fff; }
.fn { display: flex; gap: 21px; line-height: 20px; height: 20px; font-weight: 300; }
.fn svg { width: 20px; height: 20px; }
.keys { margin-top: 72px; margin-bottom: 0; }
.vscroll { display: flex; flex-direction: column; align-items: center; padding-top: 1px; fill: #44745b; gap: 1px; }
.vscroll svg, .hscroll svg { width: 20px; height: 20px; flex: none; padding: 2px; background: #f2faf5; }
.thumb { display: flex; align-items: center; justify-content: center; border: 1px solid #9fc3ae; background: linear-gradient(90deg, #e7f6ed, #d7eee0); }
.vscroll .thumb { flex: 1; width: 18px; margin-bottom: 4px; }
.grip { width: 8px; height: 8px; background: radial-gradient(#8cb49d 1px, transparent 1px) 0 0 / 4px 4px; }
.hscroll { display: flex; align-items: center; fill: #44745b; background: #fafcfb; gap: 1px; }
.hscroll .thumb { width: 114px; height: 20px; margin-left: 2px; background: linear-gradient(#e7f6ed, #d7eee0); }
.hscroll span { flex: 1; }

.status { height: 36px; flex: none; position: relative; background: #fefefe; }
.sap { position: absolute; left: 645px; top: 5px; width: 49px; height: 24px; }
.sap text { font-family: "Liberation Sans", sans-serif; font-weight: bold; fill: #fff; stroke: #fff; stroke-width: .6px; }
.play { position: absolute; right: 372px; top: 9px; width: 12px; height: 16px; }
.pill { position: absolute; right: 135px; top: 0; width: 232px; height: 36px; border-radius: 18px; background: linear-gradient(#f5faf7 66%, #d3eee1 66%); padding: 9px 15px 0 6px; }
.pill i { display: block; height: 15px; background: linear-gradient(90deg, #c8c4c4 15px, #c9cacd 15px 30px, #d5cfd2 30px 45px, #e4e7ea 45px 60px, #b8b7b8 60px 75px, #d6d2d4 75px 90px, #dfe8e4 90px 105px, #ebe9ea 105px 120px, #b6b3b4 120px 150px, #c3c0bd 150px 165px, #d7d6de 165px 180px, #e2e4e4 180px 195px, #b7b3b5 195px); }
.lock { position: absolute; right: 32px; top: 7px; width: 20px; height: 20px; }
.mark { position: absolute; right: 15px; top: 6px; font: 19px/24px "Noto Sans", sans-serif; color: #969696; text-shadow: 1px 1px #fff; }
.resize { position: absolute; right: 1px; top: 16px; width: 22px; height: 22px; }
.bottomline { height: 4px; flex: none; margin: 0 26px 0 32px; border-radius: 8px 12px 0 0; background: #4cc693; border-top: 1px solid #36a174; }

.dialog { position: absolute; left: 481px; top: 454px; width: 810px; height: 462px; border: 1px solid #1c6b4b; border-radius: 6px; background: #e9f4ec; box-shadow: 1px 5px 12px 2px rgba(50, 65, 57, .75); display: flex; flex-direction: column; }
.dialog header { height: 32px; flex: none; display: flex; align-items: center; padding: 0 6px; color: #fff; border-radius: 5px 5px 0 0; background: linear-gradient(#45bc8d, #30966d 60%, #186b49); border-top: 1px solid #77d5af; }
.dialog .exit { margin: 0 3px 3px 0; }
.dialog h2 { margin: 0 0 4px; flex: 1; font-size: 15px; font-weight: 400; }
.form { padding: 10px 0 0 4px; }
.row { height: 26px; margin-bottom: 2px; display: flex; }
.row label { width: 239px; border-bottom: 1px solid #b5bfb8; padding: 3px 0 0 2px; line-height: 20px; flex: none; margin-right: 1px; height: 26px; }
.row label[for="sw"], .row label[for="re"], .row label[for="fu"] { font-size: 14px; }
.row input { height: 26px; border: 1px solid #a0a8a3; border-top: 2px solid #8f9893; border-bottom-color: #b5bdb8; background: #fff; padding: 0 0 1px 3px; flex: none; }
.row .ro { background: #def3e6; }
.row .mid { width: 108px; margin: 0 0 0 3px; padding-left: 0; }
.w208 { width: 209px; }
.w458 { width: 459px; }
.w238 { width: 239px; }
.w188 { width: 189px; }
.w408 { width: 409px; }
.w308 { width: 309px; }
.w18 { width: 19px; }
.focus select { background: linear-gradient(#6b4b35, #6b4b35) 4px 2px / 2px 18px no-repeat, linear-gradient(#9ab4d2, #9ab4d2) 4px 2px / 126px 18px no-repeat, #ffeb98; }
.focus::before { content: ""; position: absolute; inset: -2px -3px; pointer-events: none; background: linear-gradient(#e00, #e00) 0 0 / 7px 1px, linear-gradient(#e00, #e00) 0 0 / 1px 7px, linear-gradient(#e00, #e00) 100% 0 / 7px 1px, linear-gradient(#e00, #e00) 100% 0 / 1px 7px, linear-gradient(#e00, #e00) 0 100% / 7px 1px, linear-gradient(#e00, #e00) 0 100% / 1px 7px, linear-gradient(#e00, #e00) 100% 100% / 7px 1px, linear-gradient(#e00, #e00) 100% 100% / 1px 7px; background-repeat: no-repeat; }
.group { margin: 28px 55px 0 14px; padding: 0; min-width: 0; height: 214px; flex: none; border: 1px solid #8fd0ab; border-radius: 3px 3px 0 0; background: #def4e6; }
.group h3 { margin: 0 0 6px; height: 21px; padding-left: 9px; font-size: 15px; font-weight: 400; line-height: 19px; border-bottom: 1px solid #8fcba9; background: linear-gradient(#d0f0dc, #bbe7cb); }
.group label { margin-left: 19px; width: 209px; }
.pickicon { margin-left: 23px; }
.dfoot { margin-top: auto; height: 46px; flex: none; display: flex; }
.ln { flex: 1; height: 14px; border-bottom: 1px solid #a9cdb8; }
.dfoot svg { flex: none; }
.dfoot > svg { width: 28px; height: 14px; }
.acts { width: 197px; border-top: 1px solid #a9cdb8; display: flex; gap: 3px; padding: 10px 8px 0 0; justify-content: flex-end; }
.acts .y { min-width: 26px; height: 26px; padding: 0 2px; }
.acts .y:nth-child(2) { padding: 0 6px; }
.notes { position: absolute; left: 0; top: 0; width: 1340px; height: 990px; pointer-events: none; }
```
